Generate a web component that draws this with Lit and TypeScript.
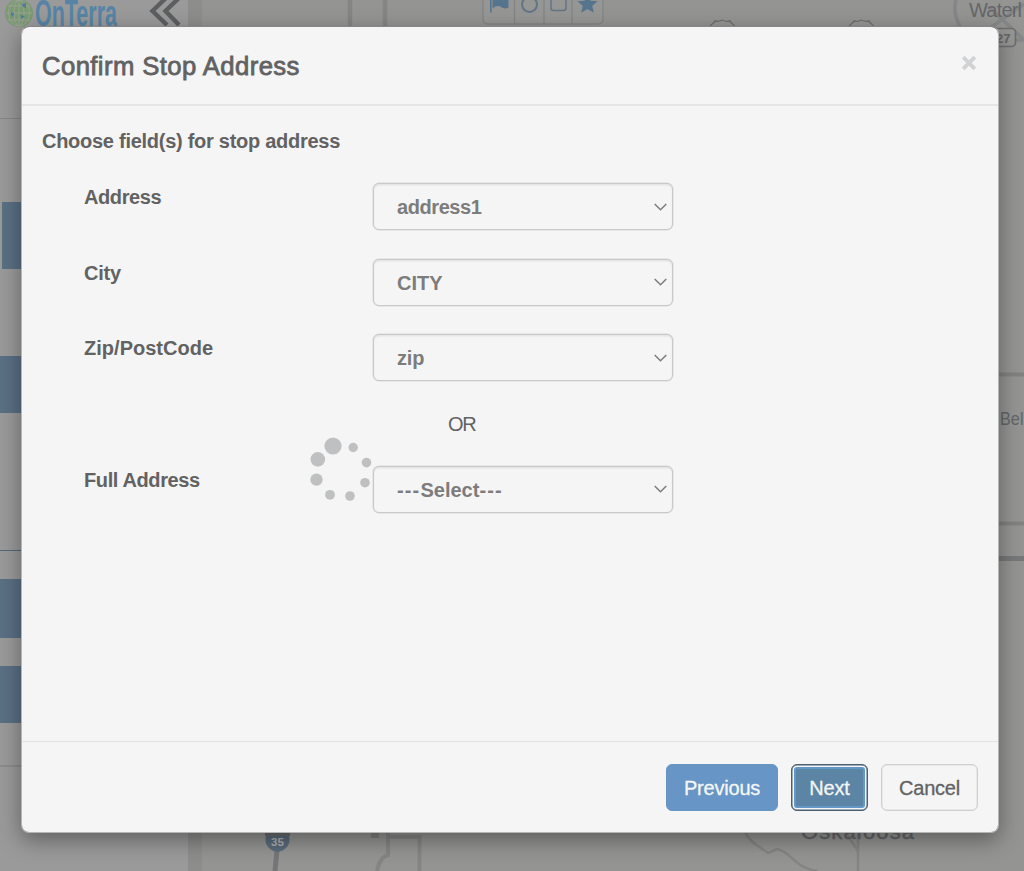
import { LitElement, html, css, svg } from "lit";
import { customElement, property } from "lit/decorators.js";

/** Dimmed application sidebar with the brand mark and its action buttons. */
@customElement("side-panel")
class SidePanel extends LitElement {
  static styles = css`
    :host { display: flex; flex-direction: column; width: 188px; height: 871px; background: #9a9a9a; border-right: 14px solid #8d8d8c; }
    .brand { display: block; flex: none; height: 118px; border-bottom: 1px solid #868686; }
    .btn { flex: none; background: #5a7084; }
    .first { margin: 83px 0 0 2px; height: 67px; }
    .second { margin-top: 87px; height: 57px; }
    .rule { flex: none; margin-top: 137px; height: 1px; background: #54697b; }
    .third { margin-top: 28px; height: 59px; }
    .fourth { margin-top: 28px; height: 57px; }
    .divider { flex: none; margin-top: 42px; height: 2px; background: #8c8c8c; }
  `;

  render() {
    return html`
      <svg class="brand" width="188" height="118" viewBox="0 0 188 118">
        <circle cx="19" cy="13" r="14" fill="#7b9a71" />
        <g fill="none" stroke="#98a294" stroke-width="1">
          <ellipse cx="19" cy="13" rx="5" ry="13" />
          <ellipse cx="19" cy="13" rx="10.5" ry="13" />
          <path d="M6 13h26M8 6h22M8 20h22M19 0v26" />
        </g>
        <path d="M11 12l3 1-1 4-2-2zM22 4l4-1v5l-3-1zM20 15l5 1-3 3z" fill="#4f7c9e" />
        <text x="35" y="25.5" font-family="Liberation Sans" font-weight="700" font-size="36" fill="#5784a6"
          textLength="82" lengthAdjust="spacingAndGlyphs">OnTerra</text>
        <path d="M168 -4L152.500 11L167 25M181 -4L165.500 11L179 25" fill="none" stroke="#5d5e5f" stroke-width="4.400" />
      </svg>
      <div class="btn first"></div>
      <div class="btn second"></div>
      <div class="rule"></div>
      <div class="btn third"></div>
      <div class="btn fourth"></div>
      <div class="divider"></div>
    `;
  }
}

/** Map canvas: roads, shields, place names and the drawing toolbar. */
@customElement("map-view")
class MapView extends LitElement {
  static styles = css`
    :host { display: block; flex: 1; height: 871px; background: #949492; overflow: hidden; }
    svg { display: block; }
    text { font-family: "Liberation Sans", Arial, sans-serif; fill: #64666a; }
  `;

  render() {
    return html`
      <svg width="822" height="871" viewBox="202 0 822 871">
        <g fill="none" stroke="#858585">
          <path d="M350 0V27M385 0V27" stroke-width="4.500" />
          <path d="M956 0c-3 10-1 18 5 28M1024 4l-20 14-14 10M990 8l34 32M1000 40h24" stroke="#858687" stroke-width="3.500" />
          <path d="M990 374.500h34M990 523.500h34" stroke="#828281" stroke-width="4" />
          <path d="M990 558.500h34" stroke="#777879" stroke-width="5" />
          <path d="M277 850l-2 21" stroke="#747678" stroke-width="5" />
          <path d="M388 828v27q-8 2-11 16M390 837h29.500v34" stroke="#848585" stroke-width="4" />
          <path d="M371 831h8" stroke="#808080" stroke-width="14" />
          <path d="M745 832c4 10 14 14 23 21l9-4c14 2 18 20 41 22M846 833l12 18v20M858 834v20" stroke="#858585" stroke-width="2.500" />
        </g>
        <g fill="#969693" stroke="#6d6e70" stroke-width="1.300">
          <path d="M710 27c1-4 4-3 5-6q4 1 7-1q4 2 8 1c1 3 4 3 5 6" />
          <path d="M849 27c1-4 4-3 5-6q4 1 7-1q4 2 8 1c1 3 4 3 5 6" />
          <rect x="985" y="28.500" width="30.500" height="18" rx="4" stroke-width="1.700" />
        </g>
        <text x="996" y="42.500" font-size="13" font-weight="700">27</text>
        <text x="969" y="17" font-size="20" textLength="53">Waterl</text>
        <text x="1000" y="425" font-size="18" textLength="23.500" lengthAdjust="spacingAndGlyphs">Bel</text>
        <text x="801" y="839" font-size="22" textLength="113" stroke="#64666a" stroke-width=".4">Oskaloosa</text>
        <circle cx="277.500" cy="839.500" r="12" fill="#5a6b7c" />
        <path d="M265 828h25v8h-25z" fill="#696b6e" />
        <text x="271" y="846" font-size="11.500" font-weight="700" style="fill:#b2b3b4">35</text>
        <path d="M483 0V19q0 5 5 5H598q5 0 5-5V0" fill="#969694" stroke="#838485" stroke-width="1.300" />
        <path d="M514.500 0V24M544 0V24M572 0V24" stroke="#838485" stroke-width="1.300" />
        <path d="M490 0h1.600v12.500h-1.600zM492.500 0H508.500V7.500q-4 2-7.500-.500t-8.500 1.500z" fill="#55748d" />
        <circle cx="529.500" cy="4.500" r="7.500" fill="none" stroke="#607588" stroke-width="2" />
        <path d="M551 0V8q0 2.500 2.500 2.500h10q2.500 0 2.500-2.500V0" fill="none" stroke="#607588" stroke-width="1.500" />
        <path d="M587.500-6l2.900 6.700 7.100.6-5.300 4.600 1.700 6.800-6.400-3.600-6.400 3.600 1.700-6.800-5.300-4.600 7.100-.6z" fill="#55748d" />
      </svg>
    `;
  }
}

@customElement("field-row")
class FieldRow extends LitElement {
  @property() label = "";
  @property() value = "";
  @property({ type: Number }) labelTracking = 0;
  @property({ type: Number }) valueTracking = 0;

  static styles = css`
    :host { display: flex; align-items: flex-start; height: 47.600px; font-weight: 700; font-size: 20px; line-height: 28px; }
    .label { width: 289px; color: #626262; }
    .select { box-sizing: border-box; display: flex; align-items: center; justify-content: space-between; width: 300px; height: 47px;
      padding: 1px 5px 0 23px; border: 1px solid #c9c9c9; border-radius: 6px; background: #f5f5f5; color: #7c7c7c;
      box-shadow: 0 0 0 .5px #d9d9d9, inset 0 1.500px 1.500px rgba(0, 0, 0, .07); }
    .dashes { letter-spacing: 1.150px; }
    svg { display: block; margin-top: -1px; }
  `;

  render() {
    const parts = this.value.split(/(-+)/).filter(Boolean);
    return html`
      <span class="label" style="letter-spacing:${this.labelTracking}px">${this.label}</span>
      <div class="select">
        <span style="letter-spacing:${this.valueTracking}px">${parts.map((p) => (p[0] === "-" ? html`<span class="dashes">${p}</span>` : p))}</span>
        <svg width="13" height="8" viewBox="0 0 13 8"><path d="M.7 1L6.500 6.700L12.300 1" fill="none" stroke="#7c7c7c" stroke-width="1.500" /></svg>
      </div>
    `;
  }
}

@customElement("app-root")
class AppRoot extends LitElement {
  static styles = css`
    :host { display: block; position: relative; width: 1024px; height: 871px; overflow: hidden; font-family: "Liberation Sans", Arial, sans-serif; color: #626262; }
    .page { display: flex; }
    .modal { position: absolute; left: 21px; top: 26px; width: 978px; height: 807px; box-sizing: border-box; display: flex; flex-direction: column;
      background: #f5f5f5; border: 1px solid #b5b5b5; border-top-color: #858585; border-radius: 8px; background-clip: padding-box; box-shadow: 0 7px 22px rgba(0, 0, 0, .38); }
    header { flex: none; box-sizing: border-box; height: 79px; padding: 0 21px 0 20px; display: flex; justify-content: space-between; align-items: center; border-bottom: 2px solid #e5e5e5; }
    h4 { margin: 1px 0 0; font-size: 25.700px; font-weight: 400; letter-spacing: .4px; -webkit-text-stroke: .8px #626262; }
    header svg { margin-top: -5px; }
    main { flex: 1; padding: 21px 20px 0; }
    .lead { margin: 0; font-size: 20px; line-height: 28px; font-weight: 700; letter-spacing: -.27px; }
    .fields { padding: 28px 0 0 42px; display: flex; flex-direction: column; gap: 28px; }
    .or { margin: 0 0 0 364px; height: 28px; line-height: 28px; font-size: 20px; letter-spacing: -1.2px; }
    footer { flex: none; box-sizing: border-box; height: 91px; border-top: 1px solid #e2e2e2; padding: 22px 20px; display: flex; justify-content: flex-end; gap: 13px; }
    button { box-sizing: border-box; height: 47px; padding: 1px 0 0; font: 20px "Liberation Sans", Arial, sans-serif; border: 1px solid #6695c4; border-radius: 6px; background: #6695c6; color: #f5f5f5; letter-spacing: -.2px; -webkit-text-stroke: .3px; }
    .previous { width: 112px; }
    .next { width: 77px; border-color: #4b6073; background: #5b84a5; box-shadow: inset 0 0 0 .5px #4b6073, inset 0 0 0 2px #f5f5f5, inset 0 0 0 4px #6397c7; }
    .cancel { width: 97px; border-color: #cfcfcf; background: #f5f5f5; color: #626262; box-shadow: inset 0 0 0 .5px #dcdcdc; }
    .spinner { position: absolute; left: 286px; top: 408px; }
  `;

  private dots = [
    [333, 446, 8.6], [353.2, 447.5, 4.7], [366.5, 462.6, 4.8], [365, 482.7, 4.8],
    [350, 496, 4.8], [330, 494.8, 4.9], [316.5, 479.6, 6.2], [317.8, 459.4, 7.3],
  ];

  private fields = [
    { label: "Address", value: "address1", lt: -0.4, vt: -0.42 },
    { label: "City", value: "CITY", lt: -0.2, vt: 0 },
    { label: "Zip/PostCode", value: "zip", lt: 0.02, vt: -0.2 },
  ];

  render() {
    return html`
      <div class="page"><side-panel></side-panel><map-view></map-view></div>
      <section class="modal" role="dialog">
        <header>
          <h4>Confirm Stop Address</h4>
          <svg width="16" height="16" viewBox="0 0 16 16"><path d="M2.200 2.200L13.800 13.800M13.800 2.200L2.200 13.800" stroke="#d1d2d3" stroke-width="3.800" /></svg>
        </header>
        <main>
          <p class="lead">Choose field(s) for stop address</p>
          <div class="fields">
            ${this.fields.map((f) => html`<field-row .label=${f.label} .value=${f.value} .labelTracking=${f.lt} .valueTracking=${f.vt}></field-row>`)}
            <div class="or">OR</div>
            <field-row .label=${"Full Address"} .value=${"---Select---"} .labelTracking=${-0.38} .valueTracking=${0}></field-row>
          </div>
        </main>
        <footer>
          <button class="previous">Previous</button>
          <button class="next">Next</button>
          <button class="cancel">Cancel</button>
        </footer>
        <svg class="spinner" width="66" height="70" viewBox="308 435 66 70">
          ${this.dots.map(([x, y, r]) => svg`<circle cx=${x} cy=${y} r=${r} fill="#bfc0c1" />`)}
        </svg>
      </section>
    `;
  }
}
